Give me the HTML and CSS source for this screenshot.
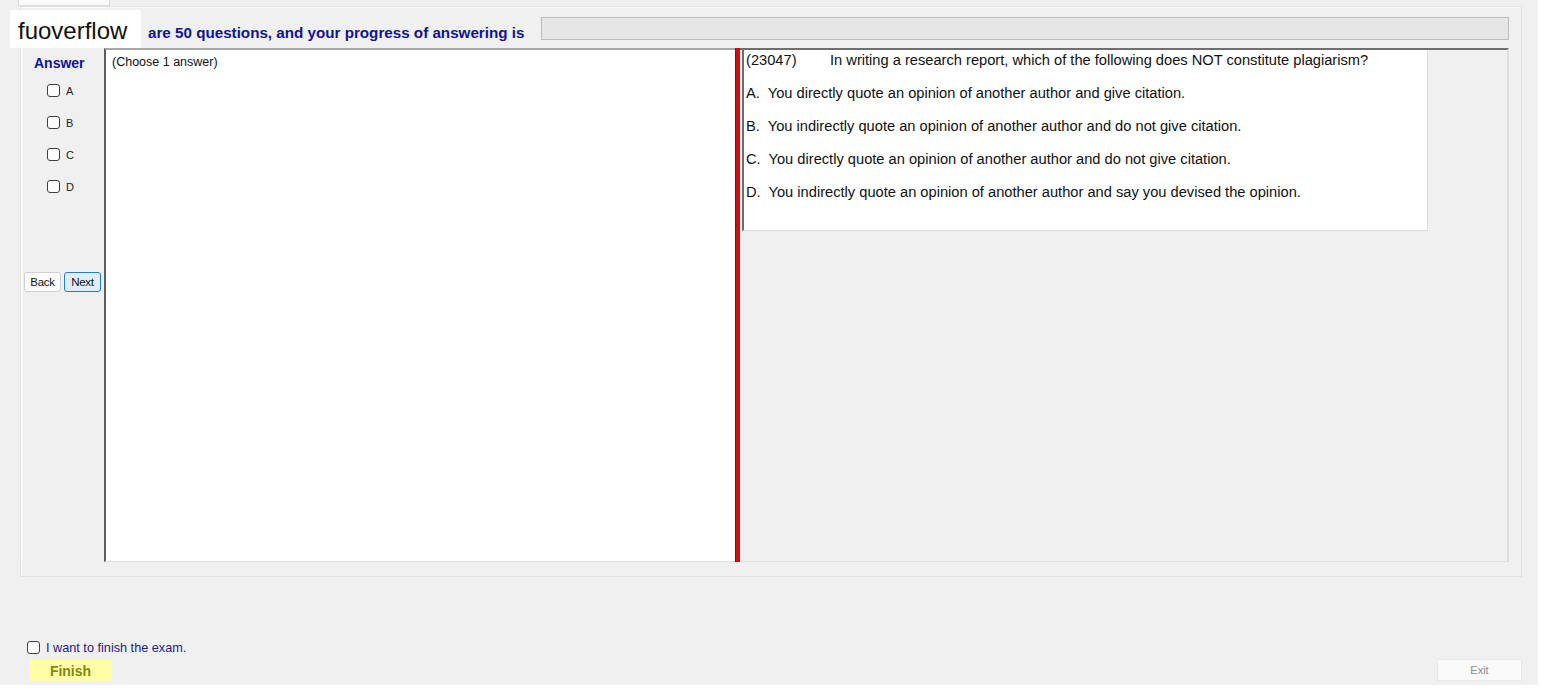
FILE: index.html
```html
<!DOCTYPE html>
<html lang="en">
  <head>
    <meta charset="utf-8">
    <title>Exam</title>
    <link rel="stylesheet" href="styles.css">
  </head>
  <body>
    <div class="window">
      <div class="tabstrip"><div class="tab"></div></div>
      <div class="tabpage">
        <div class="header">
          <div class="progress-text">are 50 questions, and your progress of answering is</div>
          <div class="progress"></div>
        </div>
        <div class="main">
          <div class="answers">
            <div class="answer-title">Answer</div>
            <label class="opt"><input type="checkbox" class="box"> A</label>
            <label class="opt"><input type="checkbox" class="box"> B</label>
            <label class="opt"><input type="checkbox" class="box"> C</label>
            <label class="opt"><input type="checkbox" class="box"> D</label>
            <div class="nav">
              <button class="btn">Back</button>
              <button class="btn btn-next">Next</button>
            </div>
          </div>
          <div class="note">(Choose 1 answer)</div>
          <div class="splitter"></div>
          <div class="question-panel">
            <div class="question">
              <p><span class="qid">(23047)</span>In writing a research report, which of the following does NOT constitute plagiarism?</p>
              <p>A.&nbsp; You directly quote an opinion of another author and give citation.</p>
              <p>B.&nbsp; You indirectly quote an opinion of another author and do not give citation.</p>
              <p>C.&nbsp; You directly quote an opinion of another author and do not give citation.</p>
              <p>D.&nbsp; You indirectly quote an opinion of another author and say you devised the opinion.</p>
            </div>
          </div>
        </div>
      </div>
      <div class="footer">
        <div class="finish-block">
          <label class="finish-check"><input type="checkbox" class="box"> I want to finish the exam.</label>
          <button class="finish">Finish</button>
        </div>
        <button class="exit">Exit</button>
      </div>
      <div class="watermark">fuoverflow</div>
    </div>
  </body>
</html>
```

FILE: styles.css
```css
body {
  margin: 0;
  background: #fff;
  font-family: 'Liberation Sans', Arial, sans-serif;
}
.window {
  position: relative;
  width: 1538px;
  height: 685px;
  background: #f0f0f0;
}
.tabstrip {
  height: 6px;
}
.tab {
  margin-left: 18px;
  width: 92px;
  height: 6px;
  box-sizing: border-box;
  background: #fafafa;
  border: 1px solid #dadada;
  border-top: none;
}
.tabpage {
  margin-left: 20px;
  width: 1502px;
  height: 571px;
  box-sizing: border-box;
  border: 1px solid #e2e2e2;
  box-shadow: inset 1px 1px 0 #fafafa;
  padding: 10px 12px 0 1px;
}
.header {
  display: flex;
  align-items: flex-start;
  height: 23px;
}
.progress-text {
  margin-left: 126px;
  padding-top: 7px;
  width: 393px;
  font-size: 15.2px;
  font-weight: bold;
  color: #101496;
  white-space: nowrap;
}
.progress {
  flex: 1;
  height: 23px;
  box-sizing: border-box;
  background: #e6e6e6;
  border: 1px solid #bcbcbc;
}
.main {
  display: flex;
  margin-top: 8px;
  height: 514px;
}
.answers {
  width: 81px;
  display: flex;
  flex-direction: column;
  align-items: flex-start;
  border-left: 1px solid #f8f8f8;
}
.answer-title {
  margin: 7px 0 0 11px;
  font-size: 14px;
  font-weight: bold;
  color: #101496;
}
.opt {
  display: flex;
  align-items: center;
  gap: 6px;
  margin: 11px 0 0 24px;
  height: 21px;
  font-size: 11px;
  color: #222;
}
.opt:first-of-type {
  margin-top: 9px;
}
.box {
  appearance: none;
  -webkit-appearance: none;
  margin: 0;
  width: 13px;
  height: 13px;
  box-sizing: border-box;
  border: 1px solid #404040;
  border-radius: 3px;
  background: #fff;
}
.nav {
  display: flex;
  gap: 3px;
  margin: 75px 0 0 1px;
}
.btn {
  width: 37px;
  height: 20px;
  padding: 0;
  font-family: 'Liberation Sans', Arial, sans-serif;
  font-size: 11.5px;
  letter-spacing: -0.3px;
  color: #111;
  background: #fdfdfd;
  border: 1px solid #d0d0d0;
  border-radius: 3px;
}
.btn-next {
  background: #e1eef9;
  border-color: #1f7fd1;
}
.note {
  width: 631px;
  box-sizing: border-box;
  background: #fff;
  border-left: 2px solid #5e5e5e;
  border-top: 2px solid #a8a8a8;
  border-bottom: 1px solid #e0e0e0;
  padding: 5px 6px;
  font-size: 12.5px;
  color: #111;
}
.splitter {
  width: 5px;
  background: #cf1010;
  border-left: 1px solid #a00000;
  box-sizing: border-box;
}
.question-panel {
  flex: 1;
  box-sizing: border-box;
  border-top: 2px solid #6f6f6f;
  border-right: 2px solid #dedede;
  border-bottom: 1px solid #e0e0e0;
  padding-left: 2px;
}
.question {
  width: 686px;
  height: 181px;
  box-sizing: border-box;
  background: #fff;
  border-left: 2px solid #6d6d6d;
  border-right: 1px solid #dcdcdc;
  border-bottom: 1px solid #dcdcdc;
  padding: 2px 0 0 2px;
  font-size: 14.67px;
  color: #111;
}
.question p {
  margin: 0 0 16px;
  line-height: 17px;
  white-space: nowrap;
}
.qid {
  display: inline-block;
  width: 84px;
}
.footer {
  display: flex;
  justify-content: space-between;
  align-items: flex-end;
  height: 108px;
  box-sizing: border-box;
  padding: 0 16px 4px 27px;
}
.finish-check {
  display: flex;
  align-items: center;
  gap: 6px;
  font-size: 12.7px;
  color: #1c1c8c;
}
.finish-check .box {
  margin-top: -2px;
}
.finish {
  display: block;
  margin: 5px 0 0 2px;
  width: 83px;
  height: 21px;
  padding: 0;
  background: #ffffa8;
  border: none;
  font-family: 'Liberation Sans', Arial, sans-serif;
  font-size: 14px;
  font-weight: bold;
  color: #85850f;
}
.exit {
  width: 85px;
  height: 22px;
  padding: 0;
  background: #fafafa;
  border: 1px solid #e8e8e8;
  font-family: 'Liberation Sans', Arial, sans-serif;
  font-size: 11px;
  color: #8a8a8a;
}
.watermark {
  position: absolute;
  left: 10px;
  top: 10px;
  width: 131px;
  height: 38px;
  box-sizing: border-box;
  padding: 7px 0 0 8px;
  background: #fff;
  font-size: 24px;
  color: #111;
}
```
